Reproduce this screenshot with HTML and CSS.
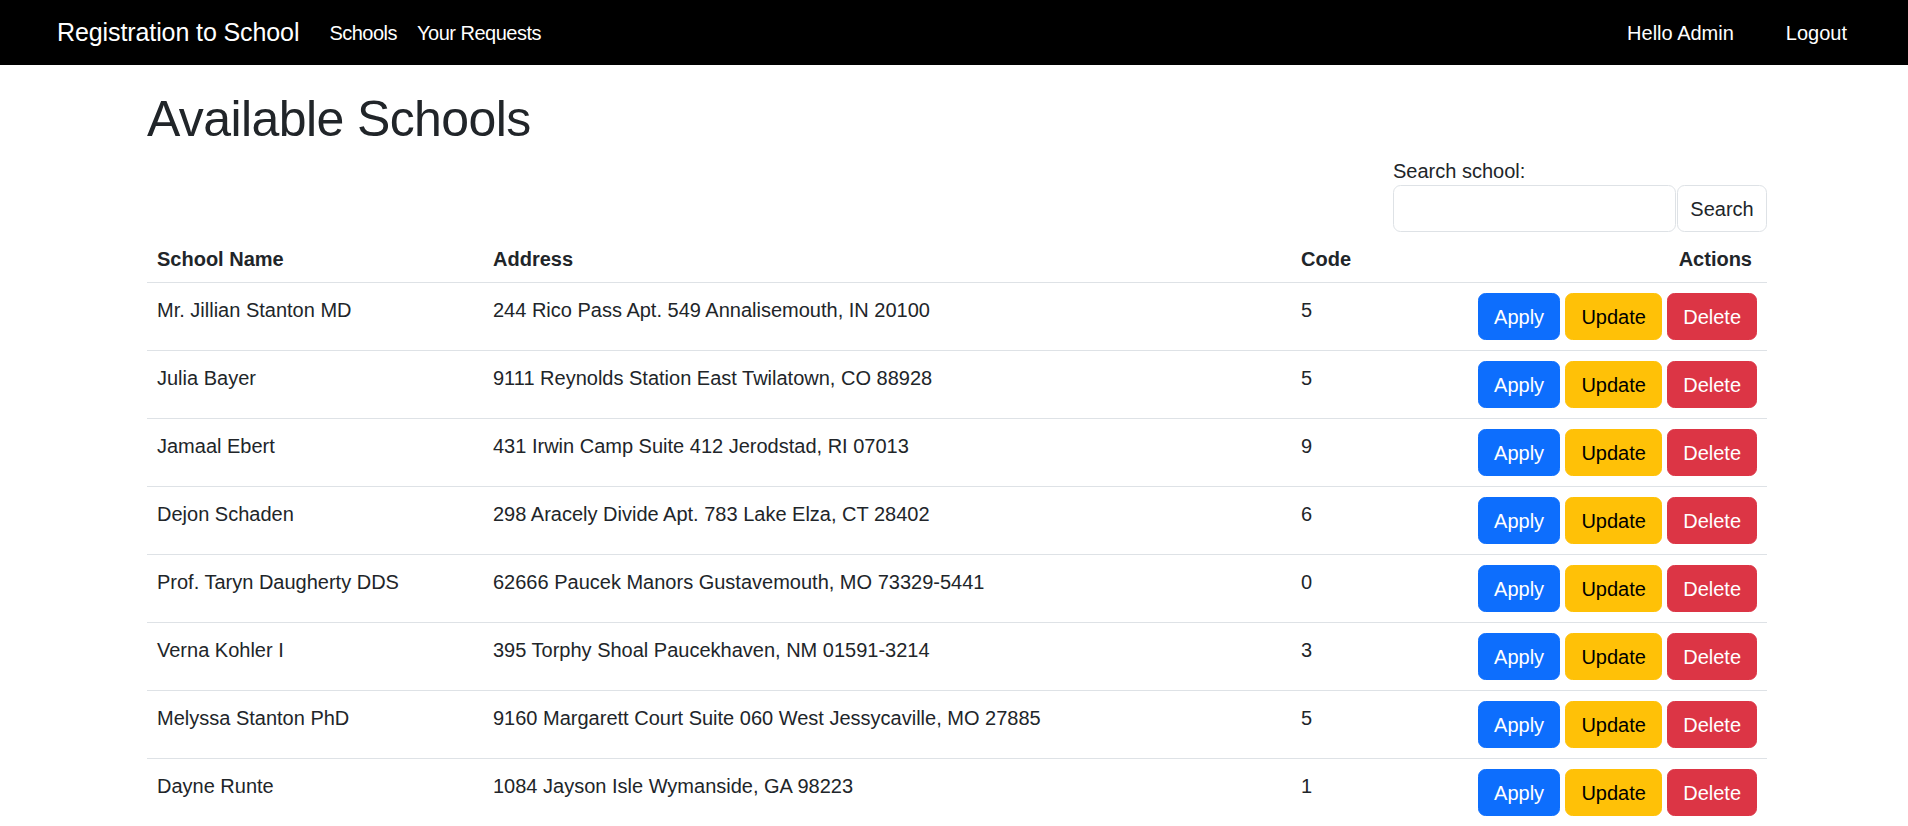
FILE: index.html
```html
<!DOCTYPE html>
<html lang="en">
<head>
<meta charset="utf-8">
<title>Registration to School</title>
<link rel="stylesheet" href="styles.css">
</head>
<body>
<nav class="navbar">
  <a class="brand" href="#">Registration to School</a>
  <ul class="nav-links">
    <li><a class="nav-link" href="#">Schools</a></li>
    <li><a class="nav-link" href="#">Your Requests</a></li>
  </ul>
  <div class="nav-right">
    <span class="nav-text">Hello Admin</span>
    <a class="nav-link logout" href="#">Logout</a>
  </div>
</nav>

<main class="container">
  <h1 class="title">Available Schools</h1>
  <div class="search-wrap">
    <form class="search">
      <label class="search-label" for="q">Search school:</label>
      <div class="search-row">
        <input id="q" class="search-input" type="text">
        <button type="button" class="search-btn">Search</button>
      </div>
    </form>
  </div>

  <table class="table">
    <thead>
      <tr>
        <th class="c-name">School Name</th>
        <th class="c-addr">Address</th>
        <th class="c-code">Code</th>
        <th class="c-act">Actions</th>
      </tr>
    </thead>
    <tbody>
      <tr><td>Mr. Jillian Stanton MD</td><td>244 Rico Pass Apt. 549 Annalisemouth, IN 20100</td><td>5</td><td class="act"><div class="btns"><button class="btn apply">Apply</button><button class="btn update">Update</button><button class="btn delete">Delete</button></div></td></tr>
      <tr><td>Julia Bayer</td><td>9111 Reynolds Station East Twilatown, CO 88928</td><td>5</td><td class="act"><div class="btns"><button class="btn apply">Apply</button><button class="btn update">Update</button><button class="btn delete">Delete</button></div></td></tr>
      <tr><td>Jamaal Ebert</td><td>431 Irwin Camp Suite 412 Jerodstad, RI 07013</td><td>9</td><td class="act"><div class="btns"><button class="btn apply">Apply</button><button class="btn update">Update</button><button class="btn delete">Delete</button></div></td></tr>
      <tr><td>Dejon Schaden</td><td>298 Aracely Divide Apt. 783 Lake Elza, CT 28402</td><td>6</td><td class="act"><div class="btns"><button class="btn apply">Apply</button><button class="btn update">Update</button><button class="btn delete">Delete</button></div></td></tr>
      <tr><td>Prof. Taryn Daugherty DDS</td><td>62666 Paucek Manors Gustavemouth, MO 73329-5441</td><td>0</td><td class="act"><div class="btns"><button class="btn apply">Apply</button><button class="btn update">Update</button><button class="btn delete">Delete</button></div></td></tr>
      <tr><td>Verna Kohler I</td><td>395 Torphy Shoal Paucekhaven, NM 01591-3214</td><td>3</td><td class="act"><div class="btns"><button class="btn apply">Apply</button><button class="btn update">Update</button><button class="btn delete">Delete</button></div></td></tr>
      <tr><td>Melyssa Stanton PhD</td><td>9160 Margarett Court Suite 060 West Jessycaville, MO 27885</td><td>5</td><td class="act"><div class="btns"><button class="btn apply">Apply</button><button class="btn update">Update</button><button class="btn delete">Delete</button></div></td></tr>
      <tr><td>Dayne Runte</td><td>1084 Jayson Isle Wymanside, GA 98223</td><td>1</td><td class="act"><div class="btns"><button class="btn apply">Apply</button><button class="btn update">Update</button><button class="btn delete">Delete</button></div></td></tr>
    </tbody>
  </table>
</main>
</body>
</html>
```
FILE: styles.css
```css
* { box-sizing: border-box; }

html, body {
  margin: 0;
  padding: 0;
  background: #fff;
}

body {
  font-family: "Liberation Sans", Arial, sans-serif;
  font-size: 20px;
  line-height: 1.5;
  color: #212529;
}

a { text-decoration: none; }

/* Navbar */
.navbar {
  display: flex;
  align-items: center;
  height: 65px;
  background: #000;
  padding: 0 61px 0 57px;
}

.brand {
  color: #fff;
  font-size: 25px;
  line-height: 37.5px;
  margin-right: 20px;
  white-space: nowrap;
  letter-spacing: -0.1px;
}

.nav-links {
  display: flex;
  list-style: none;
  margin: 0;
  padding: 0;
}

.nav-link {
  display: block;
  color: #fff;
  padding: 0 10px;
  line-height: 30px;
  letter-spacing: -0.5px;
}

.nav-right {
  margin-left: auto;
  display: flex;
  align-items: center;
}

.nav-text {
  color: #fff;
  line-height: 30px;
  margin-right: 42px;
}

.logout { padding: 0 0 0 10px; letter-spacing: 0; }

/* Main */
.container {
  width: 1620px;
  margin-left: 147px;
  display: flex;
  flex-direction: column;
}

.title {
  font-size: 50px;
  font-weight: 400;
  line-height: 60px;
  margin: 24px 0 7px;
  color: #212529;
  letter-spacing: -0.6px;
}

.search-wrap {
  display: flex;
  justify-content: flex-end;
}

.search {
  display: flex;
  flex-direction: column;
  width: 374px;
}

.search-label {
  display: block;
  line-height: 29px;
  height: 29px;
  padding-top: 1px;
}

.search-row {
  display: flex;
  gap: 1px;
}

.search-input {
  width: 283px;
  height: 47px;
  border: 1px solid #dee2e6;
  border-radius: 7.5px;
  padding: 7.5px 15px;
  font: inherit;
  background: #fff;
}

.search-btn {
  flex: 1;
  height: 47px;
  border: 1px solid #dee2e6;
  border-radius: 7.5px;
  background: #fff;
  color: #212529;
  font: inherit;
  line-height: 30px;
  padding: 7.5px 12px;
}

/* Table */
.table {
  width: 1620px;
  border-collapse: collapse;
  table-layout: fixed;
  vertical-align: top;
}

.table th,
.table td {
  padding: 12px 10px 8px;
  border-bottom: 1px solid #dee2e6;
  vertical-align: top;
  text-align: left;
  line-height: 30px;
}

.table th { font-weight: 700; }

.c-name { width: 336px; }
.c-addr { width: 808px; }
.c-code { width: 177px; }
.c-act { width: 299px; }

.table th.c-act { text-align: right; padding-right: 15px; }

.table td.act { padding: 10px 10px 10px; }

.btns {
  display: flex;
  justify-content: flex-end;
  gap: 5.3px;
}

.btn {
  height: 47px;
  padding: 7.5px 15px;
  border: 1px solid transparent;
  border-radius: 7.5px;
  font: inherit;
  line-height: 30px;
  cursor: pointer;
}

.apply { background: #0d6efd; border-color: #0d6efd; color: #fff; }
.update { background: #ffc107; border-color: #ffc107; color: #000; }
.delete { background: #dc3545; border-color: #dc3545; color: #fff; }
```
